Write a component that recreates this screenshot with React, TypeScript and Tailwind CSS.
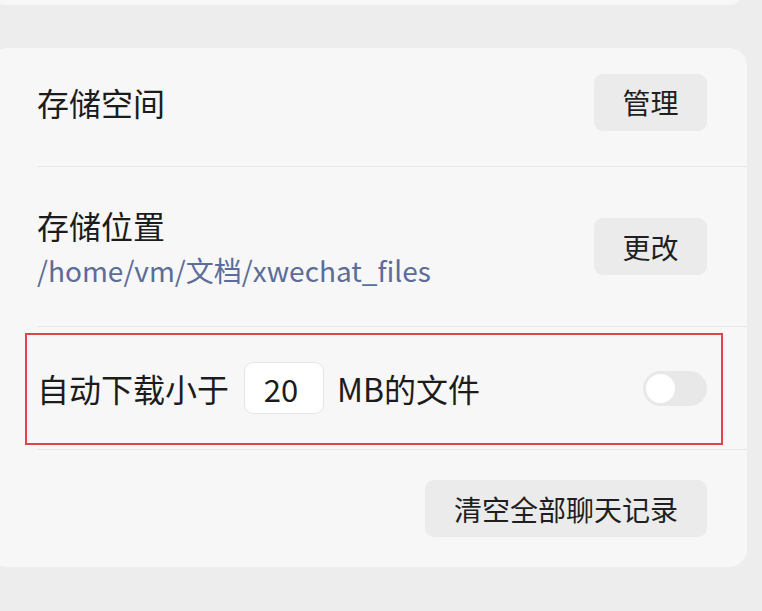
import React, { useState } from 'react';

const font = { fontFamily: '"Noto Sans CJK SC", "Noto Sans", sans-serif' };

const GrayButton: React.FC<{ label: string; wide?: boolean }> = ({ label, wide }) => (
  <button
    className={`h-[57px] rounded-[9px] bg-[#ebebeb] text-[28px] text-[#1f1f1f] ${wide ? 'px-[29px]' : 'w-[113px]'}`}
  >
    {label}
  </button>
);

const Divider: React.FC = () => <div className="ml-[47px] h-px bg-[#e6e6e6]" />;

const App: React.FC = () => {
  const [autoDownload, setAutoDownload] = useState(false);
  const [size, setSize] = useState('20');

  return (
    <div className="w-[762px] h-[611px] overflow-hidden bg-[#ededed]" style={font}>
      {/* bottom of the previous card */}
      <div className="-mt-[20px] -ml-[10px] h-[25px] w-[755px] rounded-b-[16px] bg-[#f7f7f7]" />

      <div className="mt-[43px] -ml-[10px] w-[757px] h-[519px] rounded-[18px] bg-[#f7f7f7] flex flex-col">
        <div className="h-[118px] flex items-center justify-between pl-[47px] pr-[40px] pb-[10px]">
          <span className="text-[32px] text-[#1c1c1c]">存储空间</span>
          <GrayButton label="管理" />
        </div>
        <Divider />

        <div className="h-[159px] flex items-center justify-between pl-[47px] pr-[40px]">
          <div className="flex flex-col">
            <span className="text-[32px] leading-[46px] text-[#1c1c1c]">存储位置</span>
            <span className="text-[28px] leading-[44px] text-[#5b6d98]">/home/vm/文档/xwechat_files</span>
          </div>
          <GrayButton label="更改" />
        </div>
        <Divider />

        <div className="relative h-[122px] flex items-center justify-between pl-[47px] pr-[40px]">
          <div className="absolute left-[35px] top-[6px] w-[698px] h-[112px] border-2 border-[#e0444a]" />
          <div className="flex items-center text-[32px] text-[#1c1c1c]">
            <span>自动下载小于</span>
            <input
              value={size}
              onChange={(e) => setSize(e.target.value)}
              className="ml-[15px] mr-[13px] w-[80px] h-[52px] rounded-[9px] border border-[#e4e4e4] bg-white pr-[6px] text-center text-[31px] outline-none"
            />
            <span>MB的文件</span>
          </div>
          <button
            onClick={() => setAutoDownload(!autoDownload)}
            className={`w-[64px] h-[35px] rounded-full p-[3px] flex ${autoDownload ? 'bg-[#07c160] justify-end' : 'bg-[#e8e8e8] justify-start'}`}
          >
            <span className="block w-[29px] h-[29px] rounded-full bg-white" />
          </button>
        </div>
        <Divider />

        <div className="flex-1 flex items-center justify-end pr-[40px]">
          <GrayButton label="清空全部聊天记录" wide />
        </div>
      </div>
    </div>
  );
};

export default App;
